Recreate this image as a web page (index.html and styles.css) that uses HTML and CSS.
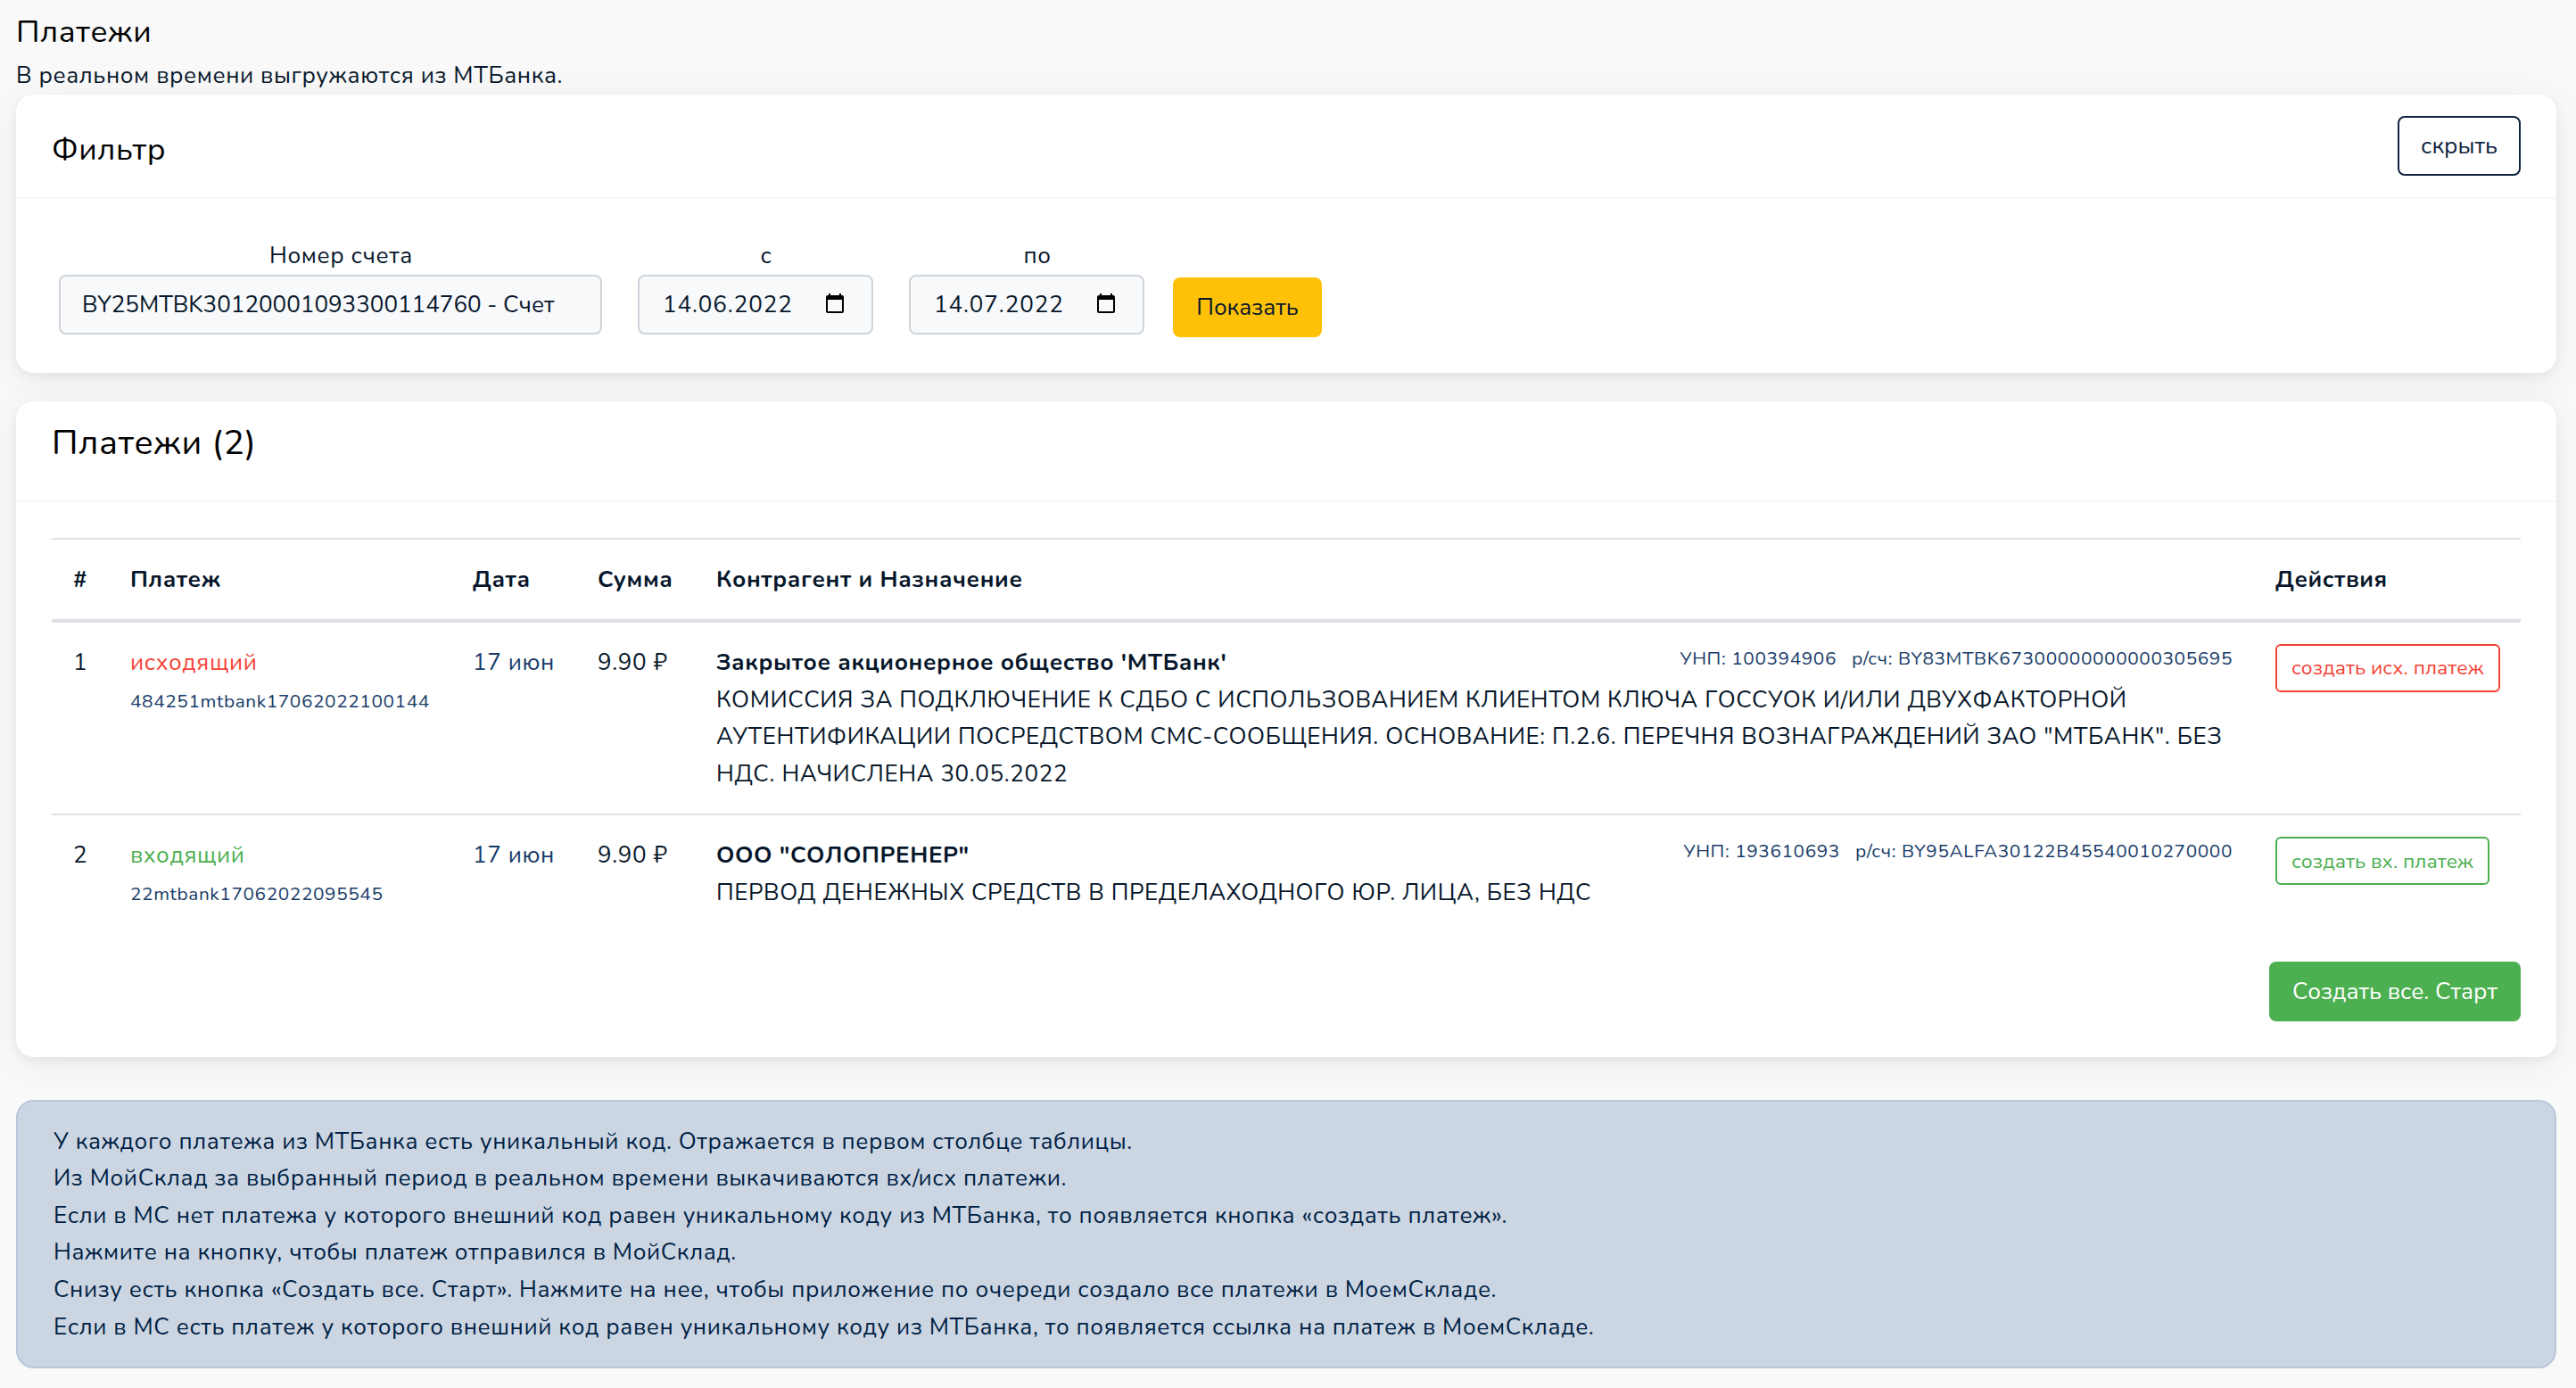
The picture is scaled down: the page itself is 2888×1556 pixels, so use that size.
FILE: index.html
```html
<!doctype html>
<html lang="ru">
<head>
    <meta charset="UTF-8">
    <title>Платежи</title>
    <link rel="stylesheet" href="styles.css">
</head>
<body>
<h4 class="page-title">Платежи</h4>
<div class="page-text">В реальном времени выгружаются из МТБанка.</div>

<div class="card">
    <div class="card-header filter-header">
        <h4>Фильтр</h4>
        <button class="btn btn-outline-dark">скрыть</button>
    </div>
    <div class="card-body filter">
        <div class="field field-account">
            <label>Номер счета</label>
            <div class="form-control">BY25MTBK30120001093300114760 - Счет</div>
        </div>
        <div class="field field-date">
            <label>с</label>
            <div class="form-control date">
                <span>14.06.2022</span>
                <svg width="20" height="22" viewBox="0 0 20 22"><path fill-rule="evenodd" d="M3 0h2v2h10V0h2v2h1q2 0 2 2v16q0 2-2 2H2q-2 0-2-2V4q0-2 2-2h1zM2 7v13h16V7z"/></svg>
            </div>
        </div>
        <div class="field field-date">
            <label>по</label>
            <div class="form-control date">
                <span>14.07.2022</span>
                <svg width="20" height="22" viewBox="0 0 20 22"><path fill-rule="evenodd" d="M3 0h2v2h10V0h2v2h1q2 0 2 2v16q0 2-2 2H2q-2 0-2-2V4q0-2 2-2h1zM2 7v13h16V7z"/></svg>
            </div>
        </div>
        <button class="btn btn-warning">Показать</button>
    </div>
</div>

<div class="card card-payments">
    <div class="card-header">
        <h3>Платежи (2)</h3>
    </div>
    <div class="card-body">
        <table class="table">
            <thead>
            <tr>
                <th class="col-num">#</th>
                <th class="col-payment">Платеж</th>
                <th class="col-date">Дата</th>
                <th class="col-sum">Сумма</th>
                <th>Контрагент и Назначение</th>
                <th class="col-action">Действия</th>
            </tr>
            </thead>
            <tbody>
            <tr>
                <td>1</td>
                <td><span class="text-danger">исходящий</span><br><small>484251mtbank17062022100144</small></td>
                <td class="text-primary">17 июн</td>
                <td>9.90 ₽</td>
                <td>
                    <div class="requisites"><span>УНП: 100394906</span><span>р/сч: BY83MTBK67300000000000305695</span></div>
                    <b>Закрытое акционерное общество 'МТБанк'</b><br>
                    КОМИССИЯ ЗА ПОДКЛЮЧЕНИЕ К СДБО С ИСПОЛЬЗОВАНИЕМ КЛИЕНТОМ КЛЮЧА ГОССУОК И/ИЛИ ДВУХФАКТОРНОЙ АУТЕНТИФИКАЦИИ ПОСРЕДСТВОМ СМС-СООБЩЕНИЯ. ОСНОВАНИЕ: П.2.6. ПЕРЕЧНЯ ВОЗНАГРАЖДЕНИЙ ЗАО "МТБАНК". БЕЗ НДС. НАЧИСЛЕНА 30.05.2022
                </td>
                <td><button class="btn btn-sm btn-outline-danger">создать исх. платеж</button></td>
            </tr>
            <tr>
                <td>2</td>
                <td><span class="text-success">входящий</span><br><small>22mtbank17062022095545</small></td>
                <td class="text-primary">17 июн</td>
                <td>9.90 ₽</td>
                <td>
                    <div class="requisites"><span>УНП: 193610693</span><span>р/сч: BY95ALFA30122B45540010270000</span></div>
                    <b>ООО "СОЛОПРЕНЕР"</b><br>
                    ПЕРВОД ДЕНЕЖНЫХ СРЕДСТВ В ПРЕДЕЛАХОДНОГО ЮР. ЛИЦА, БЕЗ НДС
                </td>
                <td><button class="btn btn-sm btn-outline-success">создать вх. платеж</button></td>
            </tr>
            </tbody>
        </table>
        <div class="card-actions">
            <button class="btn btn-success">Создать все. Старт</button>
        </div>
    </div>
</div>

<div class="alert">
    У каждого платежа из МТБанка есть уникальный код. Отражается в первом столбце таблицы.<br>
    Из МойСклад за выбранный период в реальном времени выкачиваются вх/исх платежи.<br>
    Если в МС нет платежа у которого внешний код равен уникальному коду из МТБанка, то появляется кнопка «создать платеж».<br>
    Нажмите на кнопку, чтобы платеж отправился в МойСклад.<br>
    Снизу есть кнопка «Создать все. Старт». Нажмите на нее, чтобы приложение по очереди создало все платежи в МоемСкладе.<br>
    Если в МС есть платеж у которого внешний код равен уникальному коду из МТБанка, то появляется ссылка на платеж в МоемСкладе.
</div>
</body>
</html>
```
FILE: styles.css
```css
* {
    box-sizing: border-box;
}

body {
    margin: 0;
    padding: 15px 22px 0 18px;
    font-family: Nunito, "Noto Sans", sans-serif;
    font-size: 26px;
    line-height: 1.6;
    letter-spacing: 0.605px;
    color: #07172b;
    background-color: #f9f9f9;
}

h3, h4 {
    margin: 0;
    font-weight: 400;
    line-height: 1.2;
    color: #000;
}

h3 {
    font-size: 39px;
    margin-bottom: 16px;
}

h4 {
    font-size: 35.1px;
}

.page-title {
    margin-bottom: 7px;
}

.card {
    background-color: #fff;
    border-radius: 20px;
    box-shadow: 0 8px 48px rgba(0, 0, 0, 0.06), 0 4px 12px rgba(0, 0, 0, 0.06);
}

.card-payments {
    margin-top: 32px;
}

.card-header {
    padding: 24px 40px;
    border-bottom: 2px solid #f6f6f6;
}

.filter-header {
    display: flex;
    justify-content: space-between;
}

.filter-header h4 {
    padding-top: 17px;
}

.card-body {
    padding: 40px;
}

.filter {
    display: flex;
    align-items: flex-end;
    padding-left: 48px;
}

.field {
    margin-right: 40px;
    padding-bottom: 3px;
}

.field:nth-child(3) {
    margin-right: 32px;
}

.field-account {
    width: 609px;
}

.field-date {
    width: 264px;
}

.field label {
    display: block;
    height: 45px;
    padding: 3px 0 0 24px;
    text-align: center;
}

.form-control {
    height: 67px;
    padding: 11px 24px;
    border: 2px solid #ced4da;
    border-radius: 8px;
    background-color: #f8f9fb;
    letter-spacing: 0;
}

.date {
    display: flex;
    justify-content: space-between;
    padding: 11px 31px 11px 26px;
    letter-spacing: 0.9px;
}

.date svg {
    margin-top: 8px;
}

.btn {
    height: 67px;
    padding: 1px 24px 0;
    border: 2px solid transparent;
    border-radius: 8px;
    font-family: inherit;
    font-size: 26px;
    line-height: 1.6;
    white-space: nowrap;
    background-color: transparent;
}

.btn-sm {
    display: block;
    height: 54px;
    padding: 1px 16px 0;
    border-radius: 6px;
    font-size: 22.75px;
}

.btn-outline-dark {
    color: #10243e;
    border-color: #10243e;
}

.btn-outline-danger {
    color: #f44336;
    border-color: #f44336;
}

.btn-outline-success {
    color: #4caf50;
    border-color: #4caf50;
}

.btn-warning {
    width: 167px;
    color: #07172b;
    background-color: #ffc107;
}

.btn-success {
    color: #fff;
    background-color: #4caf50;
}

.table {
    width: 100%;
    table-layout: fixed;
    border-spacing: 0;
}

.table th, .table td {
    padding: 24px;
    text-align: left;
    vertical-align: top;
    border-top: 2px solid #dee2e6;
}

.table th {
    border-bottom: 4px solid #dee2e6;
}

.table tbody tr:first-child td {
    border-top: none;
}

.col-num {
    width: 64px;
}

.col-payment {
    width: 384px;
}

.col-date {
    width: 140px;
}

.col-sum {
    width: 133px;
}

.col-action {
    width: 299px;
}

small, .requisites {
    font-size: 20.8px;
    color: #173b68;
}

.requisites {
    float: right;
}

.requisites span + span {
    margin-left: 17px;
}

.text-primary {
    color: #173b68;
}

.text-danger {
    color: #f44336;
}

.text-success {
    color: #4caf50;
}

.card-actions {
    margin-top: 32px;
    text-align: right;
    line-height: 0;
}

.alert {
    margin-top: 48px;
    padding: 24px 40px;
    border: 2px solid #b8c7da;
    border-radius: 20px;
    color: #001f44;
    background-color: #ccd6e3;
}
```
